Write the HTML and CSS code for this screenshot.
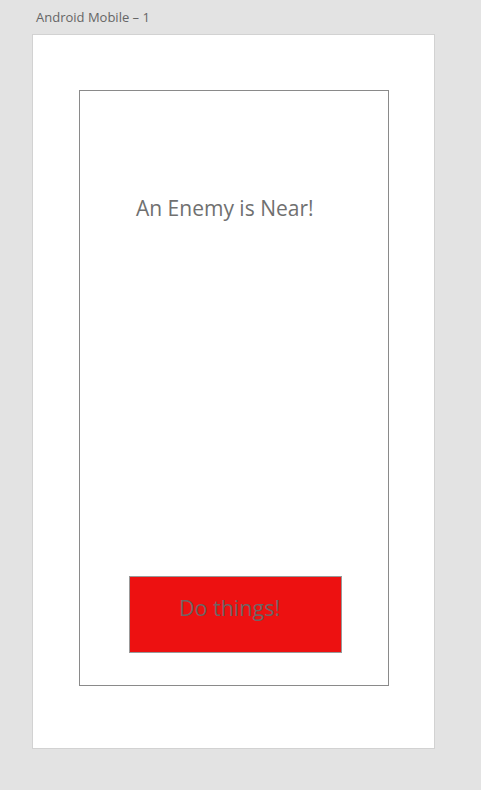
FILE: index.html
```html
<!DOCTYPE html>
<html lang="en">
<head>
    <meta charset="UTF-8">
    <meta name="viewport" content="width=device-width, initial-scale=1.0">
    <title>Android Mobile – 1</title>
    <link rel="stylesheet" href="styles.css">
</head>
<body>
    <div class="canvas">
        <div class="artboard-title">Android Mobile – 1</div>

        <div class="artboard">
            <div class="screen">
                <h1 class="enemy-text">An Enemy is Near!</h1>

                <button class="action-btn">Do things!</button>
            </div>
        </div>
    </div>
</body>
</html>
```

FILE: styles.css
```css
body {
    margin: 0;
    padding: 0;
    background-color: #e3e3e3;
    font-family: "Open Sans", "Noto Sans", sans-serif;
}
.canvas {
    padding: 7px 0 0 32px;
    height: 790px;
    box-sizing: border-box;
}
.artboard-title {
    font-size: 13px;
    line-height: 20px;
    color: #666;
    margin-left: 4px;
    height: 27px;
}
.artboard {
    width: 403px;
    height: 715px;
    box-sizing: border-box;
    background: white;
    border: 1px solid #d2d2d2;
    padding: 55px 0 0 46px;
}
.screen {
    width: 310px;
    height: 596px;
    box-sizing: border-box;
    border: 1px solid #8a8a8a;
    display: flex;
    flex-direction: column;
    align-items: flex-start;
}
.enemy-text {
    margin: 103px 0 0 56px;
    font-size: 21px;
    font-weight: normal;
    line-height: 28px;
    color: #707070;
}
.action-btn {
    margin: auto 0 32px 49px;
    width: 213px;
    height: 77px;
    box-sizing: border-box;
    background-color: #ed1111;
    border: 1px solid #999;
    padding: 0 12px 14px 0;
    font-family: inherit;
    font-size: 21.5px;
    color: #6e6464;
    text-align: center;
    cursor: pointer;
}
```
